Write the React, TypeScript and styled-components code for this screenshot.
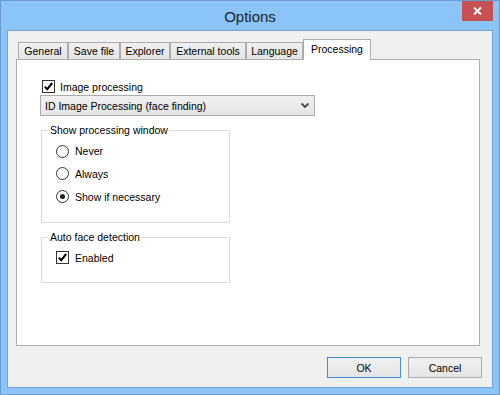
import React from "react";
import styled, { createGlobalStyle } from "styled-components";

const GlobalStyle = createGlobalStyle`
  html, body { margin: 0; padding: 0; background: #ffffff; }
  #root { width: 500px; height: 395px; }
  * { box-sizing: border-box; }
`;

const uiFont = `"Liberation Sans", Arial, sans-serif`;

const Window = styled.div`
  width: 500px;
  height: 395px;
  background: #8ac4f8;
  border: 1px solid #6a9ad0;
  display: flex;
  flex-direction: column;
  font-family: ${uiFont};
  font-size: 10.5px;
  color: #000;
`;

const TitleBar = styled.div`
  height: 29px;
  flex: none;
  display: grid;
  grid-template-columns: 1fr auto 1fr;
  padding: 0 6px;
`;

const Title = styled.div`
  grid-column: 2;
  align-self: center;
  font-size: 15px;
  color: #222;
  padding-top: 1px;
`;

const CloseButton = styled.div`
  grid-column: 3;
  justify-self: end;
  align-self: start;
  width: 31px;
  height: 20px;
  background: #c75050;
  display: flex;
  align-items: center;
  justify-content: center;
`;

const Client = styled.div`
  flex: 1;
  margin: 0 6px 6px;
  border: 1px solid #76a3d5;
  background: #f0f0f0;
  display: flex;
  flex-direction: column;
  padding: 8px 12px 0 8px;
`;

const TabStrip = styled.div`
  height: 21px;
  flex: none;
  display: flex;
  align-items: flex-end;
  padding-left: 2px;
  margin-bottom: -1px;
  position: relative;
  z-index: 1;
`;

const Tab = styled.div<{ $w: number; $active?: boolean }>`
  width: ${(p) => p.$w}px;
  height: ${(p) => (p.$active ? 21 : 17)}px;
  margin-bottom: ${(p) => (p.$active ? 0 : 1)}px;
  border: 1px solid #acacac;
  border-bottom: none;
  background: ${(p) => (p.$active ? "#ffffff" : "linear-gradient(#f0f0f0, #e5e5e5)")};
  display: flex;
  align-items: center;
  justify-content: center;
  padding-bottom: ${(p) => (p.$active ? 3 : 0)}px;
  white-space: nowrap;
`;

const Panel = styled.div`
  height: 287px;
  flex: none;
  border: 1px solid #acacac;
  background: #ffffff;
  padding: 18px 0 0 23px;
  display: flex;
  flex-direction: column;
  align-items: flex-start;
`;

const CheckRow = styled.div<{ $indent: number; $h: number }>`
  height: ${(p) => p.$h}px;
  margin-left: ${(p) => p.$indent}px;
  display: flex;
  align-items: center;
  gap: 5px;
`;

const CheckBox = styled.span`
  width: 13px;
  height: 13px;
  border: 1px solid #333333;
  background: #ffffff;
  display: flex;
  align-items: center;
  justify-content: center;
  flex: none;
`;

const Radio = styled.span<{ $checked?: boolean }>`
  width: 13px;
  height: 13px;
  border: 1px solid #333333;
  border-radius: 50%;
  background: #ffffff;
  display: flex;
  align-items: center;
  justify-content: center;
  flex: none;
  &::after {
    content: "";
    display: ${(p) => (p.$checked ? "block" : "none")};
    width: 5px;
    height: 5px;
    border-radius: 50%;
    background: #1a1a1a;
  }
`;

const Combo = styled.div`
  width: 275px;
  height: 21px;
  border: 1px solid #acacac;
  background: linear-gradient(#f0f0f0, #e5e5e5);
  display: flex;
  align-items: center;
  justify-content: space-between;
  padding: 0 5px 0 4px;
`;

const Group = styled.fieldset<{ $top: number; $pt: number; $pb: number }>`
  width: 189px;
  margin: ${(p) => p.$top}px 0 0 1px;
  padding: ${(p) => p.$pt}px 0 ${(p) => p.$pb}px 7px;
  border: 1px solid #dcdcdc;
  min-inline-size: 0;
`;

const Legend = styled.legend`
  padding: 0 1px;
  line-height: 13px;
`;

const OptionRow = styled.div<{ $h: number }>`
  height: ${(p) => p.$h}px;
  margin-left: 7px;
  display: flex;
  align-items: center;
  gap: 6px;
`;

const ButtonRow = styled.div`
  display: flex;
  justify-content: flex-end;
  gap: 7px;
  margin-top: 11px;
  margin-right: -2px;
`;

const Button = styled.div<{ $default?: boolean }>`
  width: 74px;
  height: 21px;
  border: 1px solid ${(p) => (p.$default ? "#3c8ee0" : "#acacac")};
  background: linear-gradient(#f0f0f0, #e5e5e5);
  display: flex;
  align-items: center;
  justify-content: center;
`;

const Check = () => (
  <svg width="11" height="11" viewBox="0 0 11 11">
    <path d="M1.8 5.6 L4.2 8.2 L9.2 2" fill="none" stroke="#000" strokeWidth="2" />
  </svg>
);

const tabs: { label: string; w: number }[] = [
  { label: "General", w: 50 },
  { label: "Save file", w: 52 },
  { label: "Explorer", w: 50 },
  { label: "External tools", w: 76 },
  { label: "Language", w: 57 },
];

export default function App() {
  return (
    <>
      <GlobalStyle />
      <Window>
        <TitleBar>
          <Title>Options</Title>
          <CloseButton>
            <svg width="9" height="8" viewBox="0 0 9 8">
              <path d="M1 0.5 L8 7.5 M8 0.5 L1 7.5" stroke="#fff" strokeWidth="2" />
            </svg>
          </CloseButton>
        </TitleBar>
        <Client>
          <TabStrip>
            {tabs.map((t) => (
              <Tab key={t.label} $w={t.w}>
                {t.label}
              </Tab>
            ))}
            <Tab $w={68} $active>
              Processing
            </Tab>
          </TabStrip>
          <Panel>
            <CheckRow $indent={2} $h={17}>
              <CheckBox>
                <Check />
              </CheckBox>
              <span>Image processing</span>
            </CheckRow>
            <Combo>
              <span>ID Image Processing (face finding)</span>
              <svg width="8" height="5" viewBox="0 0 8 5">
                <path d="M0.5 0.5 L4 4 L7.5 0.5" fill="none" stroke="#444" strokeWidth="1.8" />
              </svg>
            </Combo>
            <Group $top={8} $pt={3} $pb={14}>
              <Legend>Show processing window</Legend>
              <OptionRow $h={22}>
                <Radio />
                <span>Never</span>
              </OptionRow>
              <OptionRow $h={23}>
                <Radio />
                <span>Always</span>
              </OptionRow>
              <OptionRow $h={23}>
                <Radio $checked />
                <span>Show if necessary</span>
              </OptionRow>
            </Group>
            <Group $top={8} $pt={2} $pb={13}>
              <Legend>Auto face detection</Legend>
              <OptionRow $h={23}>
                <CheckBox>
                  <Check />
                </CheckBox>
                <span>Enabled</span>
              </OptionRow>
            </Group>
          </Panel>
          <ButtonRow>
            <Button $default>OK</Button>
            <Button>Cancel</Button>
          </ButtonRow>
        </Client>
      </Window>
    </>
  );
}
